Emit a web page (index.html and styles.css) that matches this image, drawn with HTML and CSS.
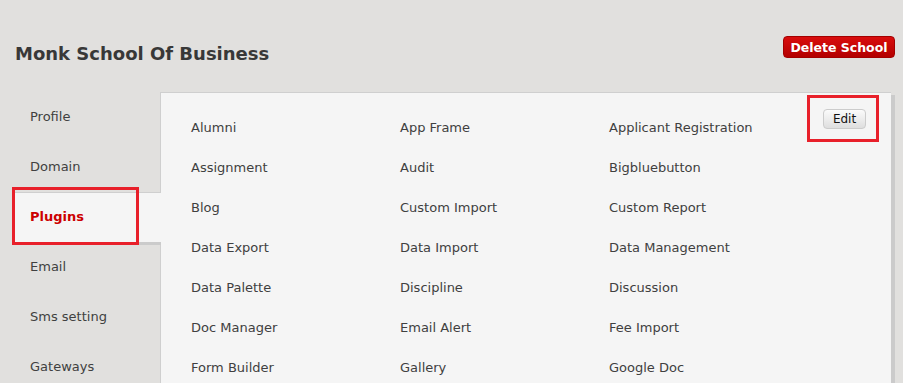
FILE: index.html
```html
<!DOCTYPE html>
<html lang="en">
<head>
    <meta charset="UTF-8">
    <title>School Settings</title>
    <link rel="stylesheet" href="styles.css">
</head>
<body>
    <div class="top">
        <h1 class="school-name">Monk School Of Business</h1>
        <button class="btn-danger" type="button">Delete School</button>
    </div>
    <div class="settings">
        <ul class="tabs">
            <li class="tab">Profile</li>
            <li class="tab">Domain</li>
            <li class="tab active">Plugins</li>
            <li class="tab">Email</li>
            <li class="tab">Sms setting</li>
            <li class="tab">Gateways</li>
        </ul>
        <span class="mark mark-tab"></span>
        <div class="panel">
            <div class="plugin-grid">
                <div class="plugin">Alumni</div>
                <div class="plugin">App Frame</div>
                <div class="plugin">Applicant Registration</div>
                <div class="plugin">Assignment</div>
                <div class="plugin">Audit</div>
                <div class="plugin">Bigbluebutton</div>
                <div class="plugin">Blog</div>
                <div class="plugin">Custom Import</div>
                <div class="plugin">Custom Report</div>
                <div class="plugin">Data Export</div>
                <div class="plugin">Data Import</div>
                <div class="plugin">Data Management</div>
                <div class="plugin">Data Palette</div>
                <div class="plugin">Discipline</div>
                <div class="plugin">Discussion</div>
                <div class="plugin">Doc Manager</div>
                <div class="plugin">Email Alert</div>
                <div class="plugin">Fee Import</div>
                <div class="plugin">Form Builder</div>
                <div class="plugin">Gallery</div>
                <div class="plugin">Google Doc</div>
            </div>
            <button class="btn-edit" type="button">Edit</button>
            <span class="mark mark-edit"></span>
        </div>
    </div>
</body>
</html>
```

FILE: styles.css
```css
body {
    margin: 0;
    background-color: #e1e0de;
    font-family: "DejaVu Sans", Verdana, sans-serif;
    color: #404040;
    overflow: hidden;
}
.top {
    display: flex;
    align-items: flex-start;
    justify-content: space-between;
    height: 92px;
    padding: 36px 8px 0 15px;
    box-sizing: border-box;
}
.school-name {
    margin: 0;
    margin-top: 7px;
    font-size: 18px;
    line-height: 22px;
    font-weight: bold;
    color: #383838;
}
.btn-danger {
    width: 112px;
    height: 22px;
    padding: 0;
    border: 1px solid #a30000;
    border-radius: 4px;
    background: linear-gradient(#d90d0d, #b30000);
    color: #fff;
    font-family: "DejaVu Sans", Verdana, sans-serif;
    font-size: 12.5px;
    font-weight: bold;
}
.settings {
    position: relative;
    display: flex;
    margin-left: 15px;
}
.tabs {
    list-style: none;
    margin: 0;
    padding: 0;
    width: 145px;
    flex-shrink: 0;
}
.tab {
    height: 50px;
    line-height: 50px;
    padding-left: 15px;
    font-size: 13px;
    color: #404040;
}
.tab.active {
    position: relative;
    box-sizing: border-box;
    height: 50px;
    line-height: 48px;
    margin-right: -1px;
    border-top: 1px solid #cfcfcf;
    background-color: #f5f5f5;
    box-shadow: 0 3px 0 #cbcbcb;
    color: #cc0000;
    font-weight: bold;
    z-index: 2;
}
.panel {
    position: relative;
    flex: 1;
    margin-right: 12px;
    min-height: 300px;
    border-top: 1px solid #cfcfcf;
    border-left: 1px solid #cfcfcf;
    background-color: #f5f5f5;
    box-shadow: 4px 3px 0 #cbcbcb;
    padding: 15px 0 0 30px;
}
.plugin-grid {
    display: grid;
    grid-template-columns: 209px 209px 209px;
}
.plugin {
    height: 40px;
    line-height: 40px;
    font-size: 13px;
    color: #404040;
}
.btn-edit {
    position: absolute;
    top: 16px;
    right: 25px;
    width: 43px;
    height: 20px;
    padding: 0;
    border: 1px solid #cccccc;
    border-radius: 4px;
    background: linear-gradient(#fbfbfb, #dedede);
    font-family: "DejaVu Sans", Verdana, sans-serif;
    font-size: 12px;
    color: #111;
}
.mark {
    position: absolute;
    border: 3px solid #e8202a;
    z-index: 3;
}
.mark-tab {
    left: -3px;
    top: 95px;
    width: 121px;
    height: 52px;
}
.mark-edit {
    top: 2px;
    right: 12px;
    width: 66px;
    height: 41px;
}
```
